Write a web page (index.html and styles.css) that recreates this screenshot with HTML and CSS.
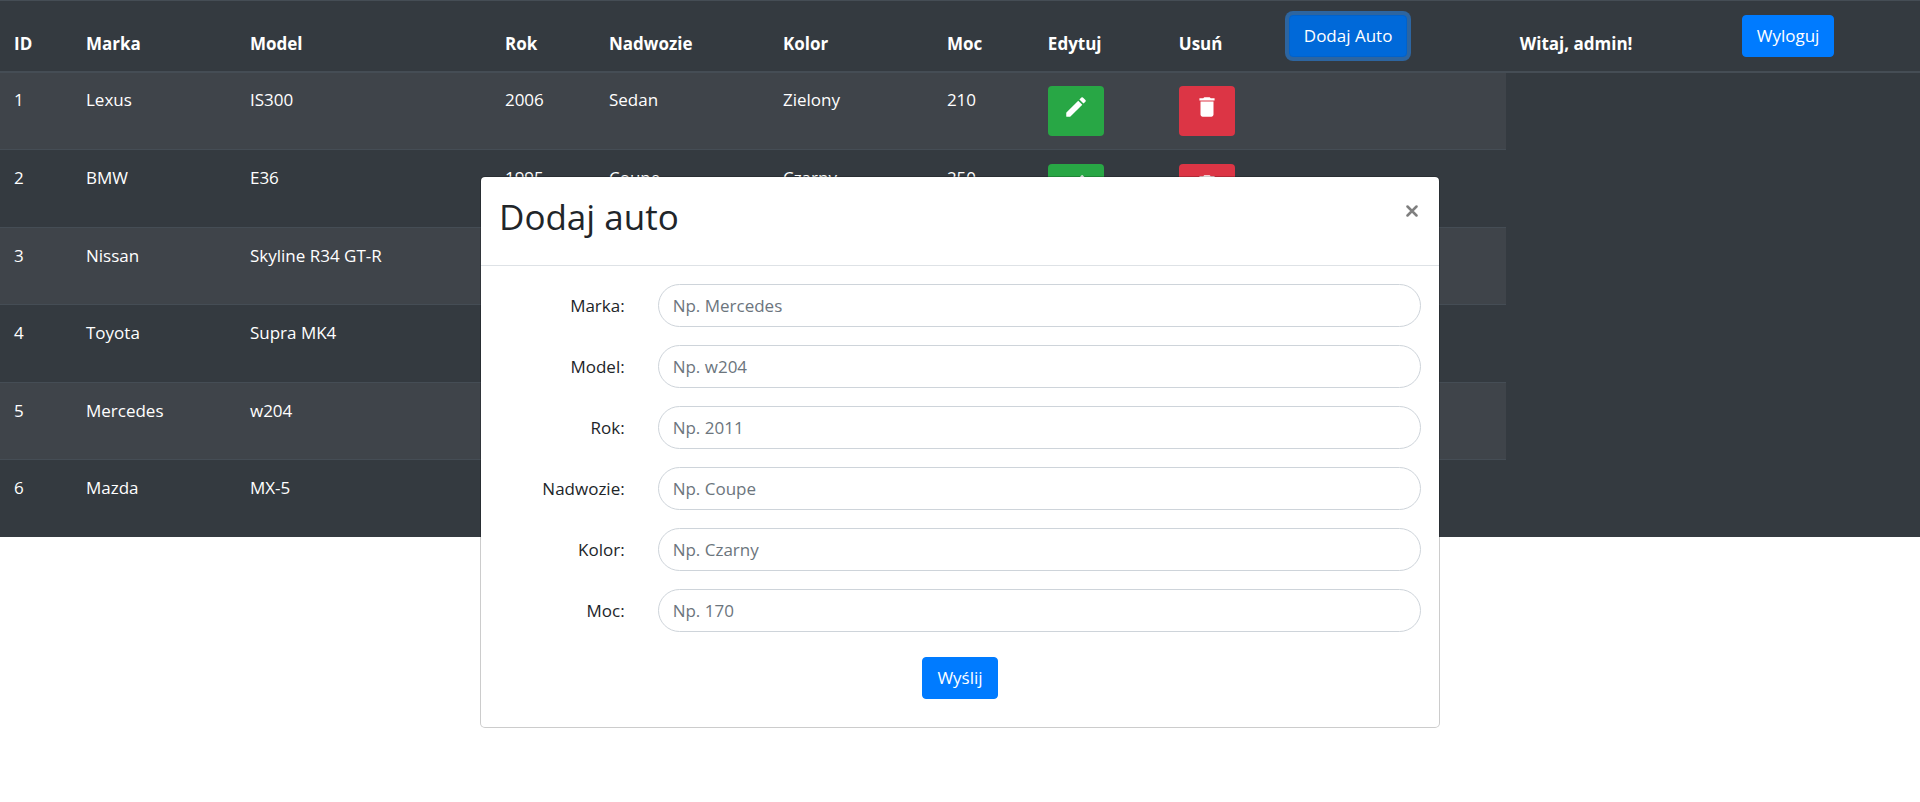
FILE: index.html
```html
<!DOCTYPE html>
<html lang="pl">
<head>
<meta charset="utf-8">
<title>Auta</title>
<link rel="stylesheet" href="styles.css">
</head>
<body>
<svg class="sprite" aria-hidden="true">
  <symbol id="edit" viewBox="0 0 24 24"><path d="M3 17.46v3.04c0 .28.22.5.5.5h3.04c.13 0 .26-.05.35-.15L17.81 9.94l-3.75-3.75L3.15 17.1c-.1.1-.15.22-.15.36zM20.71 7.04a1 1 0 0 0 0-1.41l-2.34-2.34a1 1 0 0 0-1.41 0l-1.83 1.83 3.75 3.75 1.83-1.83z"/></symbol>
  <symbol id="delete" viewBox="0 0 24 24"><path d="M6 19c0 1.1.9 2 2 2h8c1.1 0 2-.9 2-2V7H6v12zM19 4h-3.5l-1-1h-5l-1 1H5v2h14V4z"/></symbol>
</svg>
<table class="cars">
  <colgroup>
    <col class="c-id"><col class="c-brand"><col class="c-model"><col class="c-year"><col class="c-body"><col class="c-color"><col class="c-power"><col class="c-edit"><col class="c-delete"><col class="c-add"><col class="c-user"><col class="c-logout">
  </colgroup>
  <thead>
    <tr><th>ID</th><th>Marka</th><th>Model</th><th>Rok</th><th>Nadwozie</th><th>Kolor</th><th>Moc</th><th>Edytuj</th><th>Usuń</th><th><button type="button" class="btn btn-active">Dodaj Auto</button></th><th>Witaj, admin!</th><th><button type="button" class="btn">Wyloguj</button></th></tr>
  </thead>
  <tbody>
    <tr><td>1</td><td>Lexus</td><td>IS300</td><td>2006</td><td>Sedan</td><td>Zielony</td><td>210</td><td><button type="button" class="icon-btn edit" aria-label="Edytuj"><svg><use href="#edit"/></svg></button></td><td><button type="button" class="icon-btn delete" aria-label="Usuń"><svg><use href="#delete"/></svg></button></td><td></td></tr>
    <tr><td>2</td><td>BMW</td><td>E36</td><td>1995</td><td>Coupe</td><td>Czarny</td><td>250</td><td><button type="button" class="icon-btn edit" aria-label="Edytuj"><svg><use href="#edit"/></svg></button></td><td><button type="button" class="icon-btn delete" aria-label="Usuń"><svg><use href="#delete"/></svg></button></td><td></td></tr>
    <tr><td>3</td><td>Nissan</td><td>Skyline R34 GT-R</td><td></td><td></td><td></td><td></td><td></td><td></td><td></td></tr>
    <tr><td>4</td><td>Toyota</td><td>Supra MK4</td><td></td><td></td><td></td><td></td><td></td><td></td><td></td></tr>
    <tr><td>5</td><td>Mercedes</td><td>w204</td><td></td><td></td><td></td><td></td><td></td><td></td><td></td></tr>
    <tr><td>6</td><td>Mazda</td><td>MX-5</td><td></td><td></td><td></td><td></td><td></td><td></td><td></td></tr>
  </tbody>
</table>

<div class="modal" role="dialog" aria-labelledby="modal-title">
  <div class="modal-header">
    <h2 id="modal-title">Dodaj auto</h2>
    <button type="button" class="close" aria-label="Zamknij"><svg viewBox="0 0 12 12"><path d="M1.5 1.5l9 9M10.5 1.5l-9 9"/></svg></button>
  </div>
  <form class="modal-body">
    <div class="field"><label for="marka">Marka:</label><div class="control"><input id="marka" type="text" placeholder="Np. Mercedes"></div></div>
    <div class="field"><label for="model">Model:</label><div class="control"><input id="model" type="text" placeholder="Np. w204"></div></div>
    <div class="field"><label for="rok">Rok:</label><div class="control"><input id="rok" type="text" placeholder="Np. 2011"></div></div>
    <div class="field"><label for="nadwozie">Nadwozie:</label><div class="control"><input id="nadwozie" type="text" placeholder="Np. Coupe"></div></div>
    <div class="field"><label for="kolor">Kolor:</label><div class="control"><input id="kolor" type="text" placeholder="Np. Czarny"></div></div>
    <div class="field"><label for="moc">Moc:</label><div class="control"><input id="moc" type="text" placeholder="Np. 170"></div></div>
    <div class="actions"><button type="submit" class="btn">Wyślij</button></div>
  </form>
</div>
</body>
</html>
```
FILE: styles.css
```css
*, *::before, *::after { box-sizing: border-box; }

body {
  margin: 0;
  background: #fff;
  color: #212529;
  font: 400 17px/26px "Segoe UI", "Open Sans", "Noto Sans", sans-serif;
}

.sprite { display: none; }

/* Table */
.cars {
  width: 100%;
  table-layout: fixed;
  border-collapse: separate;
  border-spacing: 0;
  background: #343a40;
  color: #fff;
}

.c-id { width: 3.75%; }
.c-brand { width: 8.54%; }
.c-model { width: 13.28%; }
.c-year { width: 5.42%; }
.c-body { width: 9.06%; }
.c-color { width: 8.54%; }
.c-power { width: 5.26%; }
.c-edit { width: 6.82%; }
.c-delete { width: 5.73%; }
.c-add { width: 12.03%; }
.c-user { width: 11.56%; }

.cars th {
  padding: 14px;
  border-top: 1px solid #454d55;
  border-bottom: 2px solid #454d55;
  font-weight: 700;
  text-align: left;
  vertical-align: bottom;
  white-space: nowrap;
}

.cars td {
  height: 78px;
  padding: 14px 14px 0;
  border-top: 1px solid #454d55;
  line-height: 28px;
  vertical-align: top;
}

.cars tbody tr:nth-child(odd) td {
  height: 77px;
  background: #3f444a;
}

.cars tbody tr:first-child td {
  height: 76px;
  padding-top: 13px;
  border-top: 0;
}

/* Buttons */
.btn {
  display: block;
  height: 42px;
  padding: 0 14px;
  border: 1px solid #007bff;
  border-radius: 4px;
  background: #007bff;
  color: #fff;
  font: inherit;
  font-weight: 400;
}

.btn-active {
  border-color: #0062cc;
  background: #0069d9;
  box-shadow: 0 0 0 4px rgba(38, 143, 255, .5);
}

.icon-btn {
  display: block;
  height: 50px;
  padding: 7px 14px 15px;
  border: 1px solid transparent;
  border-radius: 4px;
  color: #fff;
}

.icon-btn svg {
  display: block;
  width: 26px;
  height: 26px;
  fill: currentColor;
}

.edit { background: #28a745; }
.delete { background: #dc3545; }

/* Modal */
.modal {
  position: absolute;
  top: 176px;
  left: 25%;
  width: 50%;
  border: 1px solid rgba(0, 0, 0, .2);
  border-radius: 5px;
  background: #fff;
  background-clip: padding-box;
}

.modal-header {
  display: flex;
  justify-content: space-between;
  align-items: flex-start;
  padding: 18px;
  border-bottom: 1px solid #dee2e6;
}

.modal-header h2 {
  margin: 0 0 8px;
  font-size: 35px;
  font-weight: 500;
  line-height: 44px;
}

.close {
  padding: 10px 3px;
  border: 0;
  background: transparent;
}

.close svg {
  display: block;
  width: 12px;
  height: 12px;
  fill: none;
  stroke: #7f7f7f;
  stroke-width: 2.5;
  stroke-linecap: round;
}

.modal-body { padding: 18px 18px 28px; }

.field {
  display: flex;
  align-items: center;
  margin: 0 -18px 18px;
}

.field label {
  flex: 0 0 16.667%;
  padding: 0 16px;
  text-align: right;
}

.control {
  flex: 1;
  padding: 0 18px 0 17px;
}

.control input {
  display: block;
  width: 100%;
  height: 43px;
  padding: 0 14px;
  border: 1px solid #ced4da;
  border-radius: 22px;
  background: #fff;
  color: #495057;
  font: inherit;
}

.control input::placeholder { color: #6c757d; opacity: 1; }

.actions {
  display: flex;
  justify-content: center;
  padding-top: 7px;
}
```
